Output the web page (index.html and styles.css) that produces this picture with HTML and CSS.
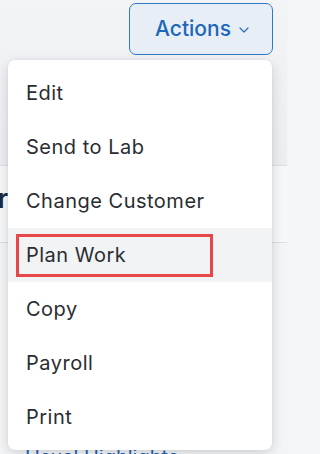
FILE: index.html
```html
<!DOCTYPE html>
<html>
<head>
<meta charset="utf-8">
<link rel="stylesheet" href="styles.css">
</head>
<body>
<div class="page">
  <header class="topbar">
    <button class="actions-btn">Actions
      <svg class="chev" width="10" height="6" viewBox="0 0 10 6"><path d="M1 1l4 4 4-4" fill="none" stroke="#2a6fc0" stroke-width="1.2" stroke-linecap="round" stroke-linejoin="round"/></svg>
    </button>
  </header>
  <section class="title-row">
    <div class="title-clip"><span class="title">Order</span></div>
  </section>
  <section class="body">
    <div class="link-line">Usual Highlights</div>
  </section>

  <ul class="menu">
    <li class="item">Edit</li>
    <li class="item">Send to Lab</li>
    <li class="item">Change Customer</li>
    <li class="item active"><span class="mark">Plan Work</span></li>
    <li class="item">Copy</li>
    <li class="item">Payroll</li>
    <li class="item">Print</li>
  </ul>
</div>
</body>
</html>
```
FILE: styles.css
```css
* { box-sizing: border-box; }
html, body { margin: 0; padding: 0; }
body {
  width: 287px;
  height: 454px;
  overflow: hidden;
  font-family: Inter, "Noto Sans", sans-serif;
  background: #f4f5f6;
}
.page { position: relative; width: 287px; height: 454px; }
.topbar {
  height: 166px;
  background: linear-gradient(180deg, #f3f4f6 0%, #eceef1 100%);
  border-bottom: 1px solid #dcdfe3;
  display: flex;
  justify-content: flex-end;
  align-items: flex-start;
  padding: 3px 14px 0 0;
}
.actions-btn {
  width: 144px;
  height: 52px;
  border: 1px solid #2f79c8;
  border-radius: 7px;
  background: #e8eef6;
  color: #1c67bb;
  font-family: Inter, "Noto Sans", sans-serif;
  font-size: 21px;
  font-weight: 500;
  display: flex;
  align-items: center;
  justify-content: center;
  gap: 8px;
  padding: 0 0 2px 2px;
}
.chev { margin-top: 4px; }
.title-row {
  height: 77px;
  background: #f7f8f9;
  border-bottom: 1px solid #dcdfe3;
  display: flex;
  align-items: center;
  padding-bottom: 12px;
}
.title-clip {
  width: 8px;
  overflow: hidden;
  display: flex;
  justify-content: flex-end;
}
.title {
  white-space: nowrap;
  font-size: 26px;
  font-weight: 600;
  color: #1b2a40;
}
.body { padding: 202px 0 0 25px; background: #f4f5f6; }
.link-line { color: #1f62b4; font-size: 20px; white-space: nowrap; }
.menu {
  position: absolute;
  left: 8px;
  top: 60px;
  width: 264px;
  margin: 0;
  padding: 6px 0;
  list-style: none;
  background: #fff;
  border-radius: 7px;
  box-shadow: 0 4px 14px rgba(0,0,0,0.14), 0 0 3px rgba(0,0,0,0.06);
}
.item {
  height: 54px;
  display: flex;
  align-items: center;
  padding-left: 18px;
  font-size: 20px;
  letter-spacing: 0.5px;
  color: #2a2d31;
}
.item.active { background: #f1f3f5; padding-left: 8px; }
.mark {
  display: flex;
  align-items: center;
  width: 197px;
  height: 43px;
  border: 3px solid #e8474a;
  padding-left: 7px;
}
```
